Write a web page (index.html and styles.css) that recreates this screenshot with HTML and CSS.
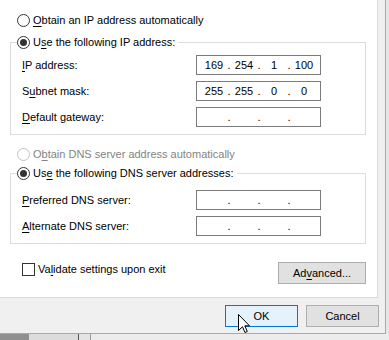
FILE: index.html
```html
<!DOCTYPE html>
<html lang="en">
  <head>
    <meta charset="UTF-8" />
    <title>Internet Protocol Version 4 (TCP/IPv4) Properties</title>
    <link rel="stylesheet" href="styles.css">
  </head>
  <body>
    <div class="dialog">
      <div class="page">
        <label class="option"><span class="radio"></span><span><u>O</u>btain an IP address automatically</span></label>
        <fieldset class="group group-ip">
          <legend class="option"><span class="radio -checked"></span><span>U<u>s</u>e the following IP address:</span></legend>
          <div class="field">
            <span class="field-label"><u>I</u>P address:</span>
            <span class="ip"><span>169</span><i>.</i><span>254</span><i>.</i><span>1</span><i>.</i><span>100</span></span>
          </div>
          <div class="field">
            <span class="field-label">S<u>u</u>bnet mask:</span>
            <span class="ip"><span>255</span><i>.</i><span>255</span><i>.</i><span>0</span><i>.</i><span>0</span></span>
          </div>
          <div class="field">
            <span class="field-label"><u>D</u>efault gateway:</span>
            <span class="ip"><span></span><i>.</i><span></span><i>.</i><span></span><i>.</i><span></span></span>
          </div>
        </fieldset>
        <label class="option option-dns -disabled"><span class="radio"></span><span>O<u>b</u>tain DNS server address automatically</span></label>
        <fieldset class="group group-dns">
          <legend class="option"><span class="radio -checked"></span><span>Us<u>e</u> the following DNS server addresses:</span></legend>
          <div class="field">
            <span class="field-label"><u>P</u>referred DNS server:</span>
            <span class="ip"><span></span><i>.</i><span></span><i>.</i><span></span><i>.</i><span></span></span>
          </div>
          <div class="field">
            <span class="field-label"><u>A</u>lternate DNS server:</span>
            <span class="ip"><span></span><i>.</i><span></span><i>.</i><span></span><i>.</i><span></span></span>
          </div>
        </fieldset>
        <div class="page-footer">
          <label class="option option-check"><span class="check"></span><span>Va<u>l</u>idate settings upon exit</span></label>
          <button class="button button-advanced">Ad<u>v</u>anced...</button>
        </div>
      </div>
      <div class="actions">
        <button class="button -default">OK</button>
        <button class="button">Cancel</button>
        <!-- mouse pointer resting on OK -->
        <svg class="cursor" width="12" height="19" viewBox="0 0 12 19">
          <path d="M0.5 0.5 L0.5 16.5 L4.5 12.8 L7 18.5 L9.3 17.5 L6.8 11.8 L11.5 11.8 Z" fill="#fff" stroke="#000" stroke-width="1" stroke-linejoin="miter" />
        </svg>
      </div>
    </div>
    <div class="backdrop">
      <span class="backdrop-dark"></span>
      <span class="backdrop-light"></span>
      <span class="backdrop-line"></span>
      <span class="backdrop-pale"></span>
      <span class="backdrop-line -soft"></span>
      <span class="backdrop-rest"></span>
    </div>
  </body>
</html>
```

FILE: styles.css
```css
* {
  margin: 0;
  padding: 0;
  box-sizing: border-box;
}

body {
  width: 389px;
  height: 340px;
  overflow: hidden;
  font-family: "Liberation Sans", Arial, sans-serif;
  font-size: 11px;
  line-height: 16px;
  color: #000;
  background-color: #e6e6e6;
}

u {
  text-decoration: underline;
  text-underline-offset: 2px;
}

.dialog {
  width: 386px;
  height: 334px;
  border-right: 1px solid #a9a9a9;
  border-bottom: 1px solid #a9a9a9;
  background-color: #f0f0f0;
}

.page {
  display: flex;
  flex-direction: column;
  width: 378px;
  height: 298px;
  padding: 12px 11px 0 10px;
  border-right: 1px solid #dadada;
  border-bottom: 1px solid #dadada;
  background-color: #fff;
}

/* radio / checkbox rows */
.option {
  display: flex;
  align-items: center;
  height: 16px;
  padding-left: 7px;
  white-space: nowrap;
}

.option.-disabled {
  color: #838383;
}

.radio {
  width: 13px;
  height: 13px;
  margin-right: 3px;
  border: 1px solid #333;
  border-radius: 50%;
  background-color: #fff;
  display: flex;
  align-items: center;
  justify-content: center;
}

.radio.-checked::after {
  content: "";
  width: 7px;
  height: 7px;
  border-radius: 50%;
  background-color: #333;
}

.-disabled .radio {
  border-color: #c2c2c2;
}

.check {
  width: 13px;
  height: 13px;
  margin-right: 3px;
  border: 1px solid #333;
  background-color: #fff;
}

/* group boxes */
.group {
  display: flex;
  flex-direction: column;
  gap: 6px;
  border: 1px solid #dcdcdc;
  padding: 5px 0 7px 0;
  min-width: 0;
}

.group > legend {
  margin-left: 6px;
  padding: 0 3px 0 0;
  line-height: 16px;
}

.group > legend.option {
  padding-left: 0;
}

.group-ip {
  margin-top: 6px;
}

.option-dns {
  margin-top: 11px;
}

.group-dns {
  margin-top: 3px;
  padding-top: 9px;
}

.field {
  display: flex;
  align-items: center;
  height: 20px;
  padding-left: 11px;
}

.field-label {
  width: 174px;
}

.ip {
  display: flex;
  align-items: center;
  width: 125px;
  height: 20px;
  padding-left: 4px;
  border: 1px solid #7a7a7a;
  background-color: #fff;
}

.ip > span {
  width: 26px;
  text-align: center;
}

.ip > i {
  width: 4px;
  font-style: normal;
  text-align: center;
}

.page-footer {
  display: flex;
  justify-content: space-between;
  align-items: flex-start;
  margin-top: 17px;
}

.option-check {
  padding-left: 12px;
  height: 16px;
}

/* buttons */
.button {
  height: 22px;
  border: 1px solid #adadad;
  background-color: #e1e1e1;
  font-family: inherit;
  font-size: 11px;
  color: #000;
}

.button-advanced {
  width: 88px;
  margin-top: 1px;
}

.button.-default {
  border-color: #0078d7;
  background-color: #e5f1fb;
}

.actions {
  position: relative;
  display: flex;
  justify-content: flex-end;
  gap: 8px;
  padding: 7px 6px 0 0;
}

.actions > .button {
  width: 73px;
}

.cursor {
  position: absolute;
  left: 238px;
  top: 16px;
}

/* windows behind the dialog */
.backdrop {
  display: flex;
  height: 6px;
}

.backdrop-dark {
  width: 29px;
  background-color: #8f8f8f;
}

.backdrop-light {
  width: 49px;
  background-color: #dcdcdc;
}

.backdrop-line {
  width: 1px;
  background-color: #555;
}

.backdrop-line.-soft {
  background-color: #9a9a9a;
}

.backdrop-pale {
  width: 11px;
  background-color: #e4e4e4;
}

.backdrop-rest {
  flex: 1;
  background-color: #ececec;
}
```
